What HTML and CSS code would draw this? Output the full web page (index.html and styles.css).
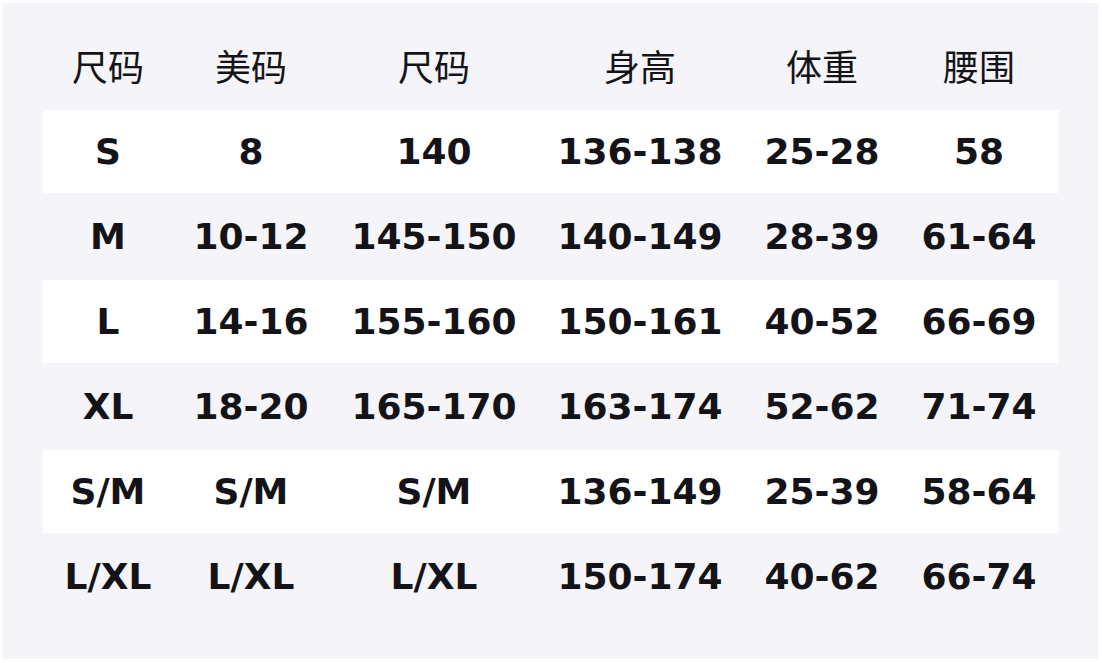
FILE: index.html
```html
<!DOCTYPE html>
<html lang="zh">
<head>
<meta charset="utf-8">
<link rel="stylesheet" href="styles.css">
</head>
<body>
<div class="panel">
  <div class="table">
    <div class="row head">
      <div>尺码</div><div>美码</div><div>尺码</div><div>身高</div><div>体重</div><div>腰围</div>
    </div>
    <div class="row alt">
      <div>S</div><div>8</div><div>140</div><div>136-138</div><div>25-28</div><div>58</div>
    </div>
    <div class="row">
      <div>M</div><div>10-12</div><div>145-150</div><div>140-149</div><div>28-39</div><div>61-64</div>
    </div>
    <div class="row alt">
      <div>L</div><div>14-16</div><div>155-160</div><div>150-161</div><div>40-52</div><div>66-69</div>
    </div>
    <div class="row">
      <div>XL</div><div>18-20</div><div>165-170</div><div>163-174</div><div>52-62</div><div>71-74</div>
    </div>
    <div class="row alt">
      <div>S/M</div><div>S/M</div><div>S/M</div><div>136-149</div><div>25-39</div><div>58-64</div>
    </div>
    <div class="row">
      <div>L/XL</div><div>L/XL</div><div>L/XL</div><div>150-174</div><div>40-62</div><div>66-74</div>
    </div>
  </div>
</div>
</body>
</html>
```

FILE: styles.css
```css
html, body {
  margin: 0;
  padding: 0;
  background: #ffffff;
}
.panel {
  margin: 3px;
  width: 1095px;
  height: 656px;
  box-sizing: border-box;
  padding: 22px 39px 0 40px;
  background: #f4f4f9;
}
.table {
  display: flex;
  flex-direction: column;
  gap: 2px;
  width: 1016px;
}
.row {
  display: grid;
  grid-template-columns: 130px 156px 210px 202px 162px 152px;
  height: 83px;
  line-height: 83px;
  text-align: center;
  color: #141418;
  font-family: "DejaVu Sans", sans-serif;
  font-weight: bold;
  font-size: 36px;
  white-space: nowrap;
}
.row.alt {
  background: #ffffff;
}
.row.head {
  font-family: "Noto Sans CJK SC", sans-serif;
  font-weight: normal;
  font-size: 36px;
  line-height: 81px;
}
```
